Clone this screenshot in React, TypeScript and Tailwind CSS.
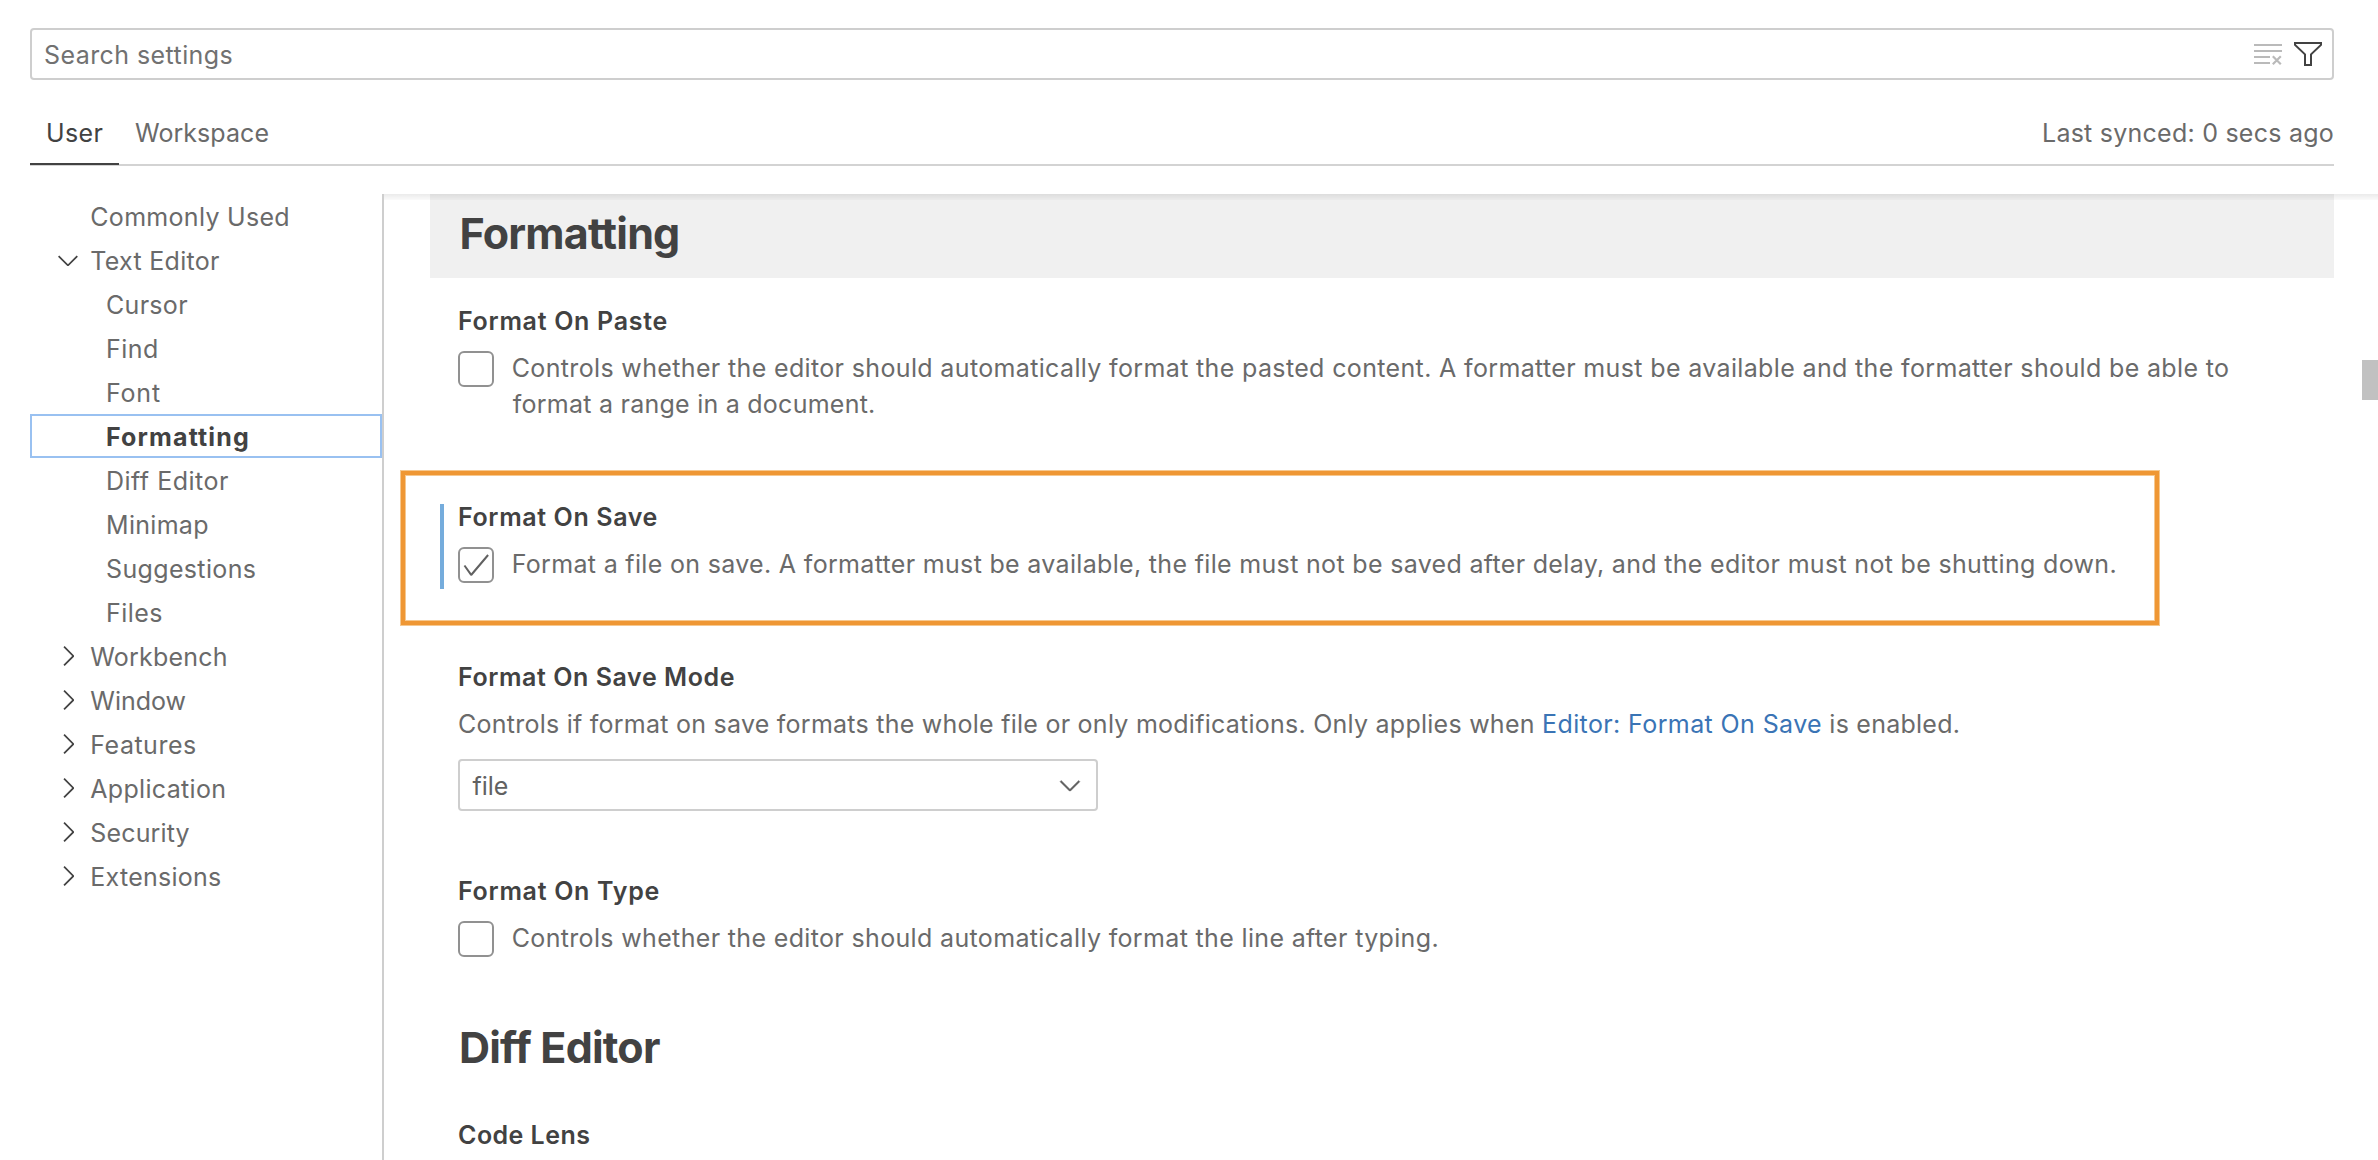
import type { ReactNode } from "react";

const CHEVRON_DOWN =
  "M7.976 10.072l4.357-4.357.62.618L8.284 11h-.618L3 6.333l.619-.618 4.357 4.357z";
const CHEVRON_RIGHT =
  "M10.072 8.024L5.715 3.667l.618-.62L11 7.716v.618L6.333 13l-.618-.619 4.357-4.357z";
const CHECK =
  "M14.431 3.323l-8.47 10-.79-.036-3.35-4.77.818-.574 2.978 4.24 8.051-9.506.764.646z";
const FILTER =
  "M15 2v1.67l-5 4.759V14H6V8.429l-5-4.76V2h14zM7 8v5h2V8l5-4.76V3H2v.24L7 8z";

function Icon({ d, className = "" }: { d: string; className?: string }) {
  return (
    <svg viewBox="0 0 16 16" className={`size-8 shrink-0 fill-current ${className}`}>
      <path fillRule="evenodd" clipRule="evenodd" d={d} />
    </svg>
  );
}

function ClearIcon() {
  return (
    <svg viewBox="0 0 32 32" className="size-8 shrink-0 text-[#bababa]" fill="none" stroke="currentColor" strokeWidth="2">
      <path d="M2 7h28M2 13h28M2 19h16M2 25h16" />
      <path d="M20.8 18.2l8 8M28.8 18.2l-8 8" strokeWidth="2.2" />
    </svg>
  );
}

type TocItem = { label: string; tracking: string; level: 0 | 1; arrow?: "down" | "right"; selected?: boolean };

const TOC: TocItem[] = [
  { label: "Commonly Used", tracking: "tracking-[0.3px]", level: 0 },
  { label: "Text Editor", tracking: "tracking-[0.28px]", level: 0, arrow: "down" },
  { label: "Cursor", tracking: "tracking-[0.3px]", level: 1 },
  { label: "Find", tracking: "tracking-[0.5px]", level: 1 },
  { label: "Font", tracking: "tracking-[0.8px]", level: 1 },
  { label: "Formatting", tracking: "tracking-[1.13px]", level: 1, selected: true },
  { label: "Diff Editor", tracking: "tracking-[0.5px]", level: 1 },
  { label: "Minimap", tracking: "tracking-[0.3px]", level: 1 },
  { label: "Suggestions", tracking: "tracking-[0.35px]", level: 1 },
  { label: "Files", tracking: "tracking-[0.45px]", level: 1 },
  { label: "Workbench", tracking: "tracking-[0.2px]", level: 0, arrow: "right" },
  { label: "Window", tracking: "tracking-[0px]", level: 0, arrow: "right" },
  { label: "Features", tracking: "tracking-[0.5px]", level: 0, arrow: "right" },
  { label: "Application", tracking: "tracking-[0.32px]", level: 0, arrow: "right" },
  { label: "Security", tracking: "tracking-[0.16px]", level: 0, arrow: "right" },
  { label: "Extensions", tracking: "tracking-[0.25px]", level: 0, arrow: "right" },
];

function TocRow({ item }: { item: TocItem }) {
  return (
    <div
      className={`flex h-11 leading-[46px] ${
        item.selected
          ? "font-bold text-[#424242] outline-2 -outline-offset-2 outline-[#99c1f1]"
          : "text-[#6a6a6a]"
      }`}
    >
      <div
        className={`flex shrink-0 items-center ${item.level === 1 ? "w-[76px]" : "w-[60.3px]"} pl-[22px] text-[#424242]`}
      >
        {item.arrow && <Icon d={item.arrow === "down" ? CHEVRON_DOWN : CHEVRON_RIGHT} />}
      </div>
      <span className={item.tracking}>{item.label}</span>
    </div>
  );
}

function Title({ tracking, children }: { tracking: string; children: ReactNode }) {
  return <h3 className={`font-[640] leading-9 text-[#424242] ${tracking}`}>{children}</h3>;
}

function CheckRow({ checked, children }: { checked?: boolean; children: ReactNode }) {
  return (
    <div className="mt-[11px] flex">
      <div className="mt-px size-9 shrink-0 rounded-md border-2 border-[#919191] text-[#616161]">
        {checked && <Icon d={CHECK} />}
      </div>
      <div className="ml-[17.7px] whitespace-nowrap leading-9">{children}</div>
    </div>
  );
}

export default function App() {
  return (
    <div className="flex h-[1160px] w-[2378px] flex-col overflow-hidden bg-white pt-7 font-[Inter,sans-serif] text-[25px] text-[#6a6a6a]">
      <header className="mr-11 ml-[30px] flex h-[166px] shrink-0 flex-col">
        <div className="flex h-[52px] shrink-0 items-center rounded border-2 border-[#cecece] pr-2 pl-3">
          <span className="flex-1 self-start leading-[50px] tracking-[0.42px] text-[#717171]">Search settings</span>
          <ClearIcon />
          <Icon d={FILTER} className="ml-2 text-[#424242]" />
        </div>
        <div className="mt-7 flex h-[58px] shrink-0 justify-between border-b-2 border-[#d3d3d3] leading-[50px]">
          <div className="flex">
            <div className="h-[57px] w-[89px] border-b-2 border-[#424242] pl-4 tracking-[0.4px] text-[#424242]">
              User
            </div>
            <div className="ml-4 tracking-[0.06px]">Workspace</div>
          </div>
          <div className="tracking-[0.24px]">Last synced: 0 secs ago</div>
        </div>
      </header>

      <div className="flex min-h-0 flex-1">
        <nav className="ml-[30px] w-[352px] shrink-0">
          {TOC.map((item) => (
            <TocRow key={item.label} item={item} />
          ))}
        </nav>

        <main className="relative flex-1 border-l-2 border-[#cecece] pr-11 pl-[46px]">
          <div className="absolute top-0 right-0 left-0 h-1.5 bg-linear-to-b from-black/8 to-black/2" />
          <div className="absolute top-[166px] right-0 h-10 w-4 bg-[#c1c1c1]" />

          <div className="h-[84px] bg-[#f0f0f0] pt-[13px] pl-[29.5px]">
            <h2 className="text-[43px] leading-[52px] font-[660] tracking-[-0.8px] text-[#424242]">Formatting</h2>
          </div>

          <div className="pl-7">
            <section className="mt-[25px]">
              <Title tracking="tracking-[0.7px]">Format On Paste</Title>
              <CheckRow>
                <p className="tracking-[0.354px]">
                  Controls whether the editor should automatically format the pasted content. A formatter must be
                  available and the formatter should be able to
                </p>
                <p className="pl-px tracking-[0.25px]">format a range in a document.</p>
              </CheckRow>
            </section>

            <section className="relative mt-[77px]">
              <div className="absolute -top-[29px] -left-[58px] h-[156px] w-[1760px] border border-[#f6c88f] outline-4 -outline-offset-5 outline-[#ef9734]">
                <div className="m-1 h-[146px] border border-[#f6c88f]" />
              </div>
              <div className="absolute top-[5px] -left-[18px] h-[85px] w-1 bg-[#75acdc]" />
              <Title tracking="tracking-[0.62px]">Format On Save</Title>
              <CheckRow checked>
                <p className="tracking-[0.322px]">
                  Format a file on save. A formatter must be available, the file must not be saved after delay, and the
                  editor must not be shutting down.
                </p>
              </CheckRow>
            </section>

            <section className="mt-[76px]">
              <Title tracking="tracking-[0.57px]">Format On Save Mode</Title>
              <p className="mt-[11px] leading-9 tracking-[0.25px]">
                Controls if format on save formats the whole file or only modifications. Only applies when{" "}
                <a className="tracking-[0.39px] text-[#3a74b5]">Editor: Format On Save</a> is enabled.
              </p>
              <div className="mt-[17px] flex h-[52px] w-[640px] items-center rounded border-2 border-[#cecece] pr-[10px] pl-[12.5px] text-[#616161]">
                <span className="flex-1 self-start leading-[50px]">file</span>
                <Icon d={CHEVRON_DOWN} className="stroke-current stroke-[0.2]" />
              </div>
            </section>

            <section className="mt-[62px]">
              <Title tracking="tracking-[0.7px]">Format On Type</Title>
              <CheckRow>
                <p className="tracking-[0.345px]">
                  Controls whether the editor should automatically format the line after typing.
                </p>
              </CheckRow>
            </section>

            <h2 className="mt-16 pl-px text-[43px] leading-[52px] font-[660] tracking-[-0.8px] text-[#424242]">
              Diff Editor
            </h2>

            <section className="mt-11">
              <Title tracking="tracking-[0.46px]">Code Lens</Title>
            </section>
          </div>
        </main>
      </div>
    </div>
  );
}
